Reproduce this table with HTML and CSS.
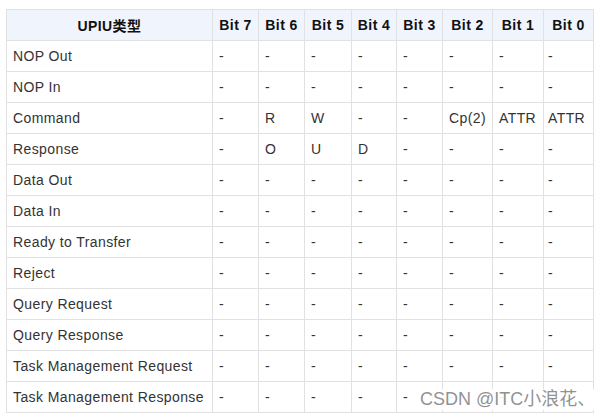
FILE: index.html
```html
<!DOCTYPE html>
<html lang="zh">
<head>
<meta charset="utf-8">
<title>UPIU</title>
<link rel="stylesheet" href="styles.css">
</head>
<body>
<div class="wrap">
<table class="upiu">
<colgroup>
<col class="c-name"><col class="c-b"><col class="c-b"><col class="c-b5"><col class="c-b4"><col class="c-b"><col class="c-b2"><col class="c-b1"><col class="c-b2">
</colgroup>
<thead>
<tr><th>UPIU类型</th><th>Bit 7</th><th>Bit 6</th><th>Bit 5</th><th>Bit 4</th><th>Bit 3</th><th>Bit 2</th><th>Bit 1</th><th>Bit 0</th></tr>
</thead>
<tbody>
<tr><td>NOP Out</td><td>-</td><td>-</td><td>-</td><td>-</td><td>-</td><td>-</td><td>-</td><td>-</td></tr>
<tr><td>NOP In</td><td>-</td><td>-</td><td>-</td><td>-</td><td>-</td><td>-</td><td>-</td><td>-</td></tr>
<tr><td>Command</td><td>-</td><td>R</td><td>W</td><td>-</td><td>-</td><td>Cp(2)</td><td>ATTR</td><td>ATTR</td></tr>
<tr><td>Response</td><td>-</td><td>O</td><td>U</td><td>D</td><td>-</td><td>-</td><td>-</td><td>-</td></tr>
<tr><td>Data Out</td><td>-</td><td>-</td><td>-</td><td>-</td><td>-</td><td>-</td><td>-</td><td>-</td></tr>
<tr><td>Data In</td><td>-</td><td>-</td><td>-</td><td>-</td><td>-</td><td>-</td><td>-</td><td>-</td></tr>
<tr><td>Ready to Transfer</td><td>-</td><td>-</td><td>-</td><td>-</td><td>-</td><td>-</td><td>-</td><td>-</td></tr>
<tr><td>Reject</td><td>-</td><td>-</td><td>-</td><td>-</td><td>-</td><td>-</td><td>-</td><td>-</td></tr>
<tr><td>Query Request</td><td>-</td><td>-</td><td>-</td><td>-</td><td>-</td><td>-</td><td>-</td><td>-</td></tr>
<tr><td>Query Response</td><td>-</td><td>-</td><td>-</td><td>-</td><td>-</td><td>-</td><td>-</td><td>-</td></tr>
<tr><td>Task Management Request</td><td>-</td><td>-</td><td>-</td><td>-</td><td>-</td><td>-</td><td>-</td><td>-</td></tr>
<tr><td>Task Management Response</td><td>-</td><td>-</td><td>-</td><td>-</td><td>-</td><td>-</td><td>-</td><td>-</td></tr>
</tbody>
</table>
<div class="watermark">CSDN @ITC小浪花、</div>
</div>
</body>
</html>
```
FILE: styles.css
```css
html, body {
  margin: 0;
  padding: 0;
  background: #ffffff;
}
.wrap {
  position: relative;
  padding: 9px 0 0 6px;
}
.upiu {
  border-collapse: collapse;
  table-layout: fixed;
  width: 588px;
  font-family: "Liberation Sans", Arial, "Noto Sans CJK SC", sans-serif;
  font-size: 14px;
  letter-spacing: 0.4px;
  color: #333333;
}
.c-name { width: 206px; }
.c-b { width: 46px; }
.c-b5 { width: 47px; }
.c-b4 { width: 45px; }
.c-b2 { width: 50px; }
.c-b1 { width: 51px; }
.upiu th,
.upiu td {
  border: 1px solid #e1e1e1;
  height: 31px;
  padding: 0 0 0 6px;
  white-space: nowrap;
  overflow: visible;
  vertical-align: middle;
  box-sizing: border-box;
}
.upiu th {
  background: #f0f4fc;
  color: #111111;
  font-weight: bold;
  text-align: center;
  padding: 0;
}
.upiu td {
  text-align: left;
}
.upiu td:last-child {
  padding-left: 4px;
}
.watermark {
  position: absolute;
  left: 418px;
  top: 389px;
  padding: 0 2px;
  background: rgba(255, 255, 255, 0.92);
  font-family: "Liberation Sans", Arial, "Noto Sans CJK SC", sans-serif;
  font-size: 18px;
  line-height: 21px;
  color: rgba(125, 125, 125, 0.85);
  white-space: nowrap;
}
```
